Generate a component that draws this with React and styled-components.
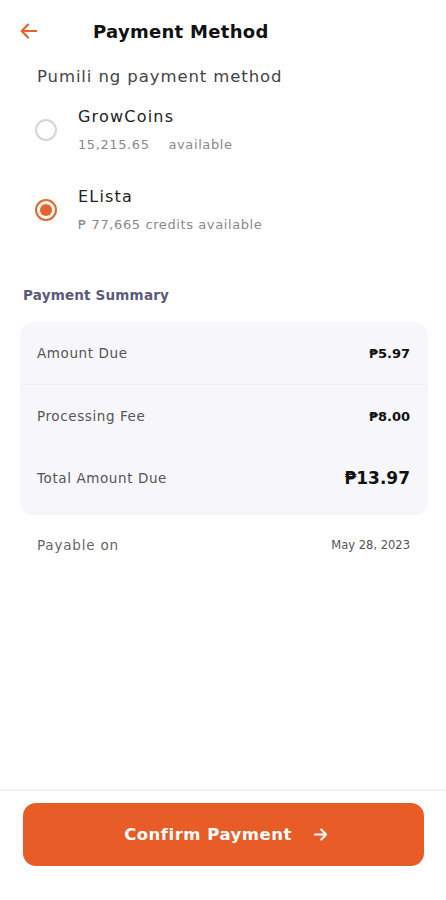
import styled, { createGlobalStyle } from "styled-components"

const GlobalStyle = createGlobalStyle`
  body {
    margin: 0;
    background: #ffffff;
    font-family: "DejaVu Sans", "Noto Sans", sans-serif;
  }
`;

const Screen = styled.div`
  width: 446px;
  height: 900px;
  display: flex;
  flex-direction: column;
  background: #fff;
`;

const Content = styled.div`
  flex: 1;
  display: flex;
  flex-direction: column;
`;

const Header = styled.div`
  height: 62px;
  display: flex;
  align-items: center;
  padding-left: 18px;
`;

const BackButton = styled.div`
  width: 22px;
  height: 22px;
  display: flex;
  align-items: center;
  color: #e8622a;
`;

const Title = styled.h1`
  margin: 0 0 0 53px;
  font-size: 18px;
  font-weight: 700;
  color: #111;
  letter-spacing: 0.3px;
`;

const Prompt = styled.p`
  margin: 5px 0 0 37px;
  font-size: 16.5px;
  color: #444;
  letter-spacing: 0.9px;
`;

const Options = styled.div`
  display: flex;
  flex-direction: column;
  gap: 35px;
  padding: 21px 0 0 35px;
`;

const Option = styled.label`
  display: flex;
  align-items: center;
  gap: 21px;
`;

const Radio = styled.span`
  width: 22px;
  height: 22px;
  box-sizing: border-box;
  border-radius: 50%;
  border: 2px solid ${p => (p.$checked ? "#e8622a" : "#d4d4de")};
  display: flex;
  align-items: center;
  justify-content: center;
  &::after {
    content: "";
    width: 12px;
    height: 12px;
    border-radius: 50%;
    background: ${p => (p.$checked ? "#e8622a" : "transparent")};
  }
`;

const OptionText = styled.div`
  display: flex;
  flex-direction: column;
  gap: 11px;
`;

const OptionName = styled.span`
  font-size: 16px;
  color: #222;
  letter-spacing: 1.2px;
`;

const OptionSub = styled.span`
  font-size: 13px;
  color: #8a8a8a;
  letter-spacing: 0.6px;
  white-space: pre;
`;

const SectionLabel = styled.h2`
  margin: 55px 0 0 23px;
  font-size: 13.5px;
  font-weight: 600;
  color: #5b5b78;
  letter-spacing: 0.2px;
`;

const Card = styled.div`
  margin: 19px 18px 0 20px;
  background: #f7f7fb;
  border-radius: 14px;
  display: flex;
  flex-direction: column;
`;

const Row = styled.div`
  height: 62px;
  display: flex;
  align-items: center;
  justify-content: space-between;
  padding: 0 18px 0 17px;
  border-bottom: ${p => (p.$divider ? "1px solid #eeeef4" : "none")};
  &:last-child {
    padding-bottom: 6px;
  }
`;

const RowLabel = styled.span`
  font-size: 13.5px;
  color: #555;
  letter-spacing: 0.6px;
`;

const RowValue = styled.span`
  font-size: ${p => (p.$big ? "17px" : "13px")};
  font-weight: 700;
  color: #111;
`;

const DueRow = styled.div`
  display: flex;
  justify-content: space-between;
  align-items: center;
  padding: 22px 36px 0 37px;
`;

const DueLabel = styled.span`
  font-size: 13.5px;
  color: #666;
  letter-spacing: 0.8px;
`;

const DueDate = styled.span`
  font-size: 11.5px;
  color: #555;
`;

const Footer = styled.div`
  border-top: 2px solid #f3f3f3;
  padding: 12px 22px 34px 23px;
`;

const ConfirmButton = styled.button`
  width: 100%;
  height: 63px;
  border: none;
  border-radius: 13px;
  background: #e85d27;
  color: #fff;
  font-family: inherit;
  font-size: 16.5px;
  font-weight: 700;
  letter-spacing: 0.5px;
  display: flex;
  align-items: center;
  justify-content: center;
  gap: 20px;
  padding-left: 6px;
  padding-right: 0;
`;

const ArrowLeft = () => (
  <svg width="22" height="22" viewBox="0 0 24 24" fill="none" stroke="currentColor" strokeWidth="2.4" strokeLinecap="round" strokeLinejoin="round">
    <path d="M20 12H4M11 5l-7 7 7 7" />
  </svg>
);

const ArrowRight = () => (
  <svg width="17" height="17" viewBox="0 0 24 24" fill="none" stroke="currentColor" strokeWidth="2.8" strokeLinecap="round" strokeLinejoin="round">
    <path d="M4 12h15M13 5l7 7-7 7" />
  </svg>
);

const methods = [
  { name: "GrowCoins", sub: "15,215.65    available", checked: false },
  { name: "ELista", sub: "₱ 77,665 credits available", checked: true },
];

const summary = [
  { label: "Amount Due", value: "₱5.97" },
  { label: "Processing Fee", value: "₱8.00" },
  { label: "Total Amount Due", value: "₱13.97", big: true },
];

export default function App() {
  return (
    <Screen>
      <GlobalStyle />
      <Content>
        <Header>
          <BackButton><ArrowLeft /></BackButton>
          <Title>Payment Method</Title>
        </Header>
        <Prompt>Pumili ng payment method</Prompt>
        <Options>
          {methods.map(m => (
            <Option key={m.name}>
              <Radio $checked={m.checked} />
              <OptionText>
                <OptionName>{m.name}</OptionName>
                <OptionSub>{m.sub}</OptionSub>
              </OptionText>
            </Option>
          ))}
        </Options>
        <SectionLabel>Payment Summary</SectionLabel>
        <Card>
          {summary.map((s, i) => (
            <Row key={s.label} $divider={i === 0}>
              <RowLabel>{s.label}</RowLabel>
              <RowValue $big={s.big}>{s.value}</RowValue>
            </Row>
          ))}
        </Card>
        <DueRow>
          <DueLabel>Payable on</DueLabel>
          <DueDate>May 28, 2023</DueDate>
        </DueRow>
      </Content>
      <Footer>
        <ConfirmButton>
          Confirm Payment
          <ArrowRight />
        </ConfirmButton>
      </Footer>
    </Screen>
  )
}
